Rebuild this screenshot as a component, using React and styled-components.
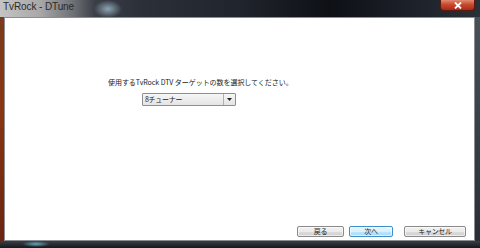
import React from 'react';
import styled, {createGlobalStyle} from 'styled-components';

const Global = createGlobalStyle`
    html, body { margin: 0; padding: 0; background: #1a1c20; }
    #root { width: 480px; height: 248px; overflow: hidden; }
`

const Win = styled.div`
    width: 480px;
    height: 248px;
    display: flex;
    flex-direction: column;
    font-family: "Noto Sans CJK JP", "Noto Sans", sans-serif;
`

const TitleBar = styled.div`
    height: 17px;
    flex: none;
    display: flex;
    align-items: flex-start;
    justify-content: space-between;
    background:
        radial-gradient(ellipse 14px 9px at 108px 9px, rgba(170, 200, 220, .75), rgba(170, 200, 220, 0)),
        linear-gradient(90deg, #c4c4c4 0px, #a8a8a8 40px, #6a6d72 75px, #3a3e46 95px, #2c3038 140px, #20242c 240px, #0e1016 330px, #1a1e26 400px, #2a3038 480px);
`

const Title = styled.span`
    font-family: "Liberation Sans", Arial, sans-serif;
    font-size: 10px;
    line-height: 12px;
    color: #2a2a2a;
    padding: 1px 0 0 3px;
    letter-spacing: -0.1px;
`

const CloseBtn = styled.div`
    width: 33px;
    height: 10px;
    margin-right: 5px;
    border: 1px solid #5a1a10;
    border-top: none;
    border-radius: 0 0 4px 4px;
    background: linear-gradient(180deg, #e08a70 0%, #c84a30 45%, #a82a18 100%);
    display: flex;
    align-items: center;
    justify-content: center;
`

const Middle = styled.div`
    flex: 1;
    display: flex;
`

const SideFrame = styled.div`
    width: ${(p) => p.w}px;
    flex: none;
    background: ${(p) => p.bg};
`

const Client = styled.div`
    flex: 1;
    background: #fff;
    border: 1px solid #8a8e94;
    display: flex;
    flex-direction: column;
`

const Content = styled.div`
    flex: 1;
    padding: 59px 0 0 103px;
    display: flex;
    flex-direction: column;
    align-items: flex-start;
`

const Label = styled.div`
    font-size: 7px;
    line-height: 10px;
    color: #1a1a1a;
    letter-spacing: -0.05px;
    white-space: nowrap;
`

const Select = styled.div`
    margin: 6px 0 0 34px;
    width: 92px;
    height: 11px;
    border: 1px solid #8f8f8f;
    border-radius: 1px;
    display: flex;
    background: linear-gradient(180deg, #f6f6f6, #e4e4e4);
`

const SelectText = styled.div`
    flex: 1;
    font-size: 7px;
    line-height: 11px;
    padding-left: 2px;
    color: #1a1a1a;
    letter-spacing: -0.3px;
    border-right: 1px solid #b0b0b0;
`

const Arrow = styled.div`
    width: 11px;
    display: flex;
    align-items: center;
    justify-content: center;
`

const ButtonRow = styled.div`
    display: flex;
    justify-content: flex-end;
    padding: 0 8px 3px 0;
`

const Button = styled.div`
    width: ${(p) => p.w}px;
    height: 9px;
    margin-left: ${(p) => p.gap}px;
    border: 1px solid ${(p) => (p.primary ? '#3c8fc8' : '#8a8a8a')};
    border-radius: 2px;
    background: ${(p) => (p.primary
        ? 'linear-gradient(180deg, #eaf6fd 0%, #d9f0fc 50%, #bee6fd 51%, #a7d9f5 100%)'
        : 'linear-gradient(180deg, #f2f2f2 0%, #ebebeb 50%, #dddddd 51%, #cfcfcf 100%)')};
    box-shadow: inset 0 0 0 1px rgba(255, 255, 255, .6);
    font-size: 7px;
    line-height: 9px;
    text-align: center;
    color: #1a1a1a;
    letter-spacing: -0.3px;
`

const BottomFrame = styled.div`
    height: 7px;
    flex: none;
    background:
        radial-gradient(ellipse 14px 3px at 36px 3px, rgba(110, 200, 220, .8), rgba(110, 200, 220, 0)),
        linear-gradient(180deg, #3a3e44, #15181c);
`

export default function App() {
    return (
        <Win>
            <Global />
            <TitleBar>
                <Title>TvRock - DTune</Title>
                <CloseBtn>
                    <svg width="8" height="7" viewBox="0 0 8 7">
                        <path d="M1 0.5 L7 6.5 M7 0.5 L1 6.5" stroke="#fff" strokeWidth="1.8" />
                    </svg>
                </CloseBtn>
            </TitleBar>
            <Middle>
                <SideFrame w={4} bg="linear-gradient(180deg, #7a3a1c 0%, #8a3612 40%, #6a2410 100%)" />
                <Client>
                    <Content>
                        <Label>使用するTvRock DTV ターゲットの数を選択してください。</Label>
                        <Select>
                            <SelectText>8チューナー</SelectText>
                            <Arrow>
                                <svg width="5" height="3" viewBox="0 0 5 3">
                                    <path d="M0 0 H5 L2.5 3 Z" fill="#222" />
                                </svg>
                            </Arrow>
                        </Select>
                    </Content>
                    <ButtonRow>
                        <Button w={45} gap={0}>戻る</Button>
                        <Button w={42} gap={5} primary>次へ</Button>
                        <Button w={60} gap={11}>キャンセル</Button>
                    </ButtonRow>
                </Client>
                <SideFrame w={5} bg="linear-gradient(180deg, #4a5058, #2a2e34)" />
            </Middle>
            <BottomFrame />
        </Win>
    );
}
